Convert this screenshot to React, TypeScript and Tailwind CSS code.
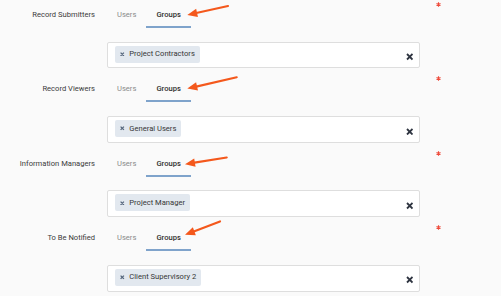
const sections = [
  { label: "Record Submitters", chip: "Project Contractors", tail: [228, 6], tip: [187.3, 15] },
  { label: "Record Viewers", chip: "General Users", tail: [236.7, 3.3], tip: [187.3, 14.6] },
  { label: "Information Managers", chip: "Project Manager", tail: [226.7, 8.5], tip: [185, 15.2] },
  { label: "To Be Notified", chip: "Client Supervisory 2", tail: [220, -1.5], tip: [185, 11.8] },
];

function Arrow({ tail, tip }: { tail: number[]; tip: number[] }) {
  const dx = tip[0] - tail[0];
  const dy = tip[1] - tail[1];
  const len = Math.hypot(dx, dy);
  const ux = dx / len;
  const uy = dy / len;
  // base of the arrow head
  const bx = tip[0] - ux * 10;
  const by = tip[1] - uy * 10;
  const px = -uy * 4.2;
  const py = ux * 4.2;
  return (
    <svg className="absolute left-0 top-0 w-[501px] h-[74px] overflow-visible pointer-events-none">
      <line x1={tail[0]} y1={tail[1]} x2={bx + ux * 2} y2={by + uy * 2} stroke="#f4581c" strokeWidth="2.2" strokeLinecap="round" />
      <polygon points={`${tip[0]},${tip[1]} ${bx + px},${by + py} ${bx - px},${by - py}`} fill="#f4581c" />
    </svg>
  );
}

function Section({ label, chip, tail, tip }: (typeof sections)[number]) {
  return (
    <div className="relative h-[74.4px]">
      <div className="flex h-[28px] text-[7.6px] leading-[12px]">
        <div className="w-[107px] pr-[12px] pt-[9px] text-right text-[#3a3a3a]">{label}</div>
        <div className="px-[10px] pt-[9px] text-[#8a8a8a]">Users</div>
        <div className="px-[10px] pt-[9px] font-medium text-[#2f2f2f] border-b-[2.5px] border-[#7fa3cb]">Groups</div>
      </div>
      <div className="mt-[13.7px] ml-[107.3px] w-[313px] h-[26.7px] bg-white border border-[#dedede] rounded-[2px] flex items-start pl-[7px] pr-[6px] pt-[3px]">
        <div className="h-[17px] bg-[#e2e8ef] rounded-[2px] flex items-center pl-[5px] pr-[5px] gap-[4.5px]">
          <svg width="4.5" height="4.5" viewBox="0 0 4.5 4.5">
            <path d="M0.6 0.6 L3.9 3.9 M3.9 0.6 L0.6 3.9" stroke="#56677d" strokeWidth="1.3" />
          </svg>
          <span className="text-[7.6px] leading-[12px] text-[#363636]">{chip}</span>
        </div>
        <svg className="ml-auto self-center mt-[1px]" width="7.5" height="7.5" viewBox="0 0 7.5 7.5">
          <path d="M1 1 L6.5 6.5 M6.5 1 L1 6.5" stroke="#2e3440" strokeWidth="1.8" />
        </svg>
      </div>
      <svg className="absolute left-[436px] top-[1.8px]" width="5" height="5" viewBox="0 0 5 5">
        <path d="M2.5 0.3 V4.7 M0.5 1.4 L4.5 3.6 M4.5 1.4 L0.5 3.6" stroke="#ee4a3a" strokeWidth="1.1" />
      </svg>
      <Arrow tail={tail} tip={tip} />
    </div>
  );
}

export default function App() {
  return (
    <div className="w-[501px] h-[296px] bg-[#fafafa] overflow-hidden font-['Roboto',sans-serif]">
      {sections.map((s) => (
        <Section key={s.label} {...s} />
      ))}
    </div>
  );
}
